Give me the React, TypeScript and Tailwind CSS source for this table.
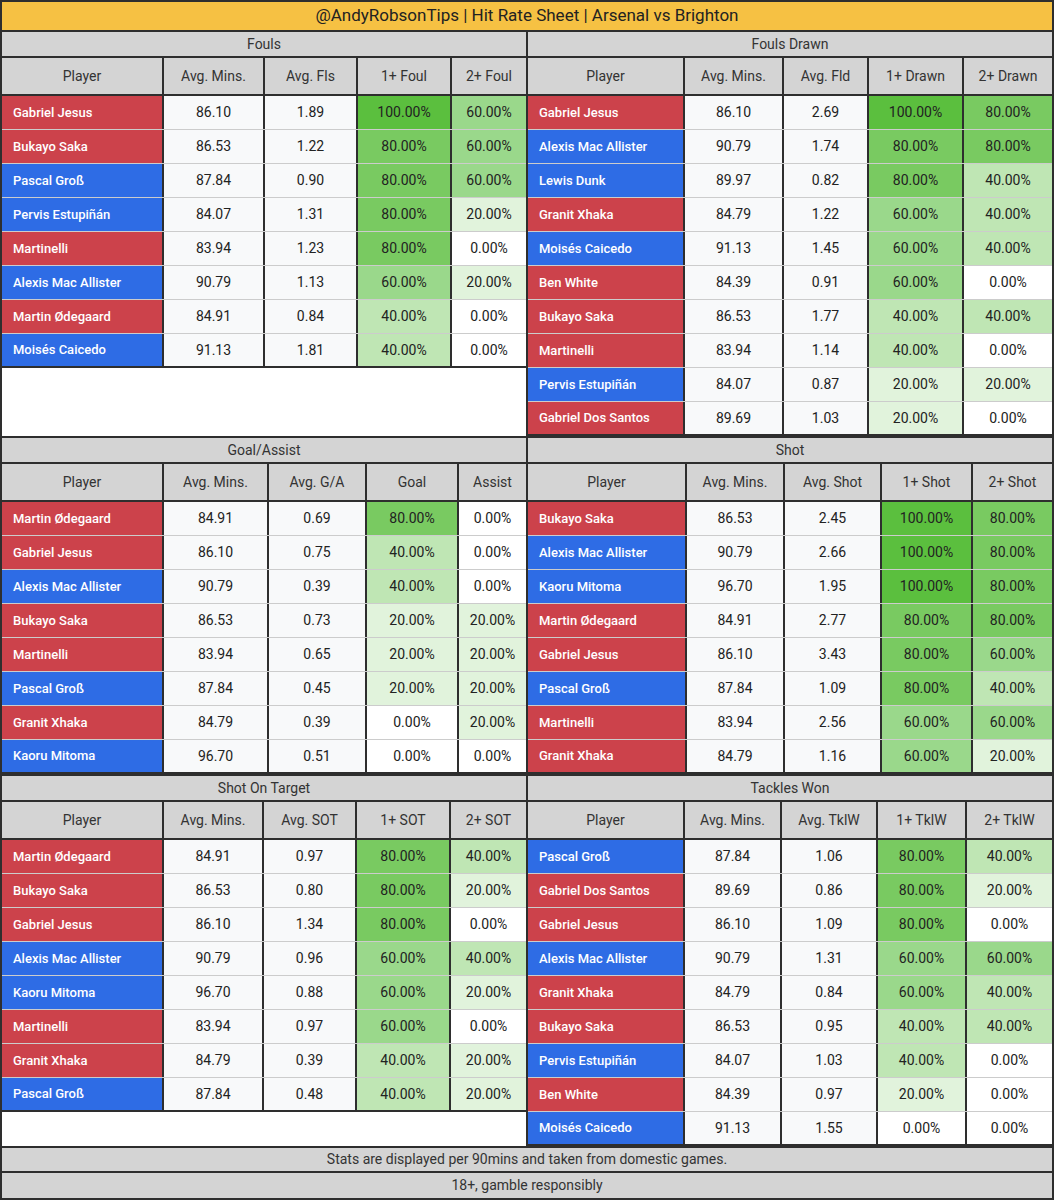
type Team = "A" | "B";
type Row = [string, Team, string, string, number, number];

interface Section {
    title: string;
    cols: string[];
    widths: string[];
    rows: Row[];
}

const pctBg: Record<number, string> = {
    100: "bg-[#5bbf3e]",
    80: "bg-[#79ca61]",
    60: "bg-[#9ad88b]",
    40: "bg-[#bfe6b4]",
    20: "bg-[#e1f3dc]",
    0: "bg-white",
};

const fouls: Section = {
    title: "Fouls",
    cols: ["Player", "Avg. Mins.", "Avg. Fls", "1+ Foul", "2+ Foul"],
    widths: ["w-[162px]", "w-[101px]", "w-[93px]", "w-[94px]"],
    rows: [
        ["Gabriel Jesus", "A", "86.10", "1.89", 100, 60],
        ["Bukayo Saka", "A", "86.53", "1.22", 80, 60],
        ["Pascal Groß", "B", "87.84", "0.90", 80, 60],
        ["Pervis Estupiñán", "B", "84.07", "1.31", 80, 20],
        ["Martinelli", "A", "83.94", "1.23", 80, 0],
        ["Alexis Mac Allister", "B", "90.79", "1.13", 60, 20],
        ["Martin Ødegaard", "A", "84.91", "0.84", 40, 0],
        ["Moisés Caicedo", "B", "91.13", "1.81", 40, 0],
    ],
};

const foulsDrawn: Section = {
    title: "Fouls Drawn",
    cols: ["Player", "Avg. Mins.", "Avg. Fld", "1+ Drawn", "2+ Drawn"],
    widths: ["w-[157px]", "w-[99px]", "w-[85px]", "w-[95px]"],
    rows: [
        ["Gabriel Jesus", "A", "86.10", "2.69", 100, 80],
        ["Alexis Mac Allister", "B", "90.79", "1.74", 80, 80],
        ["Lewis Dunk", "B", "89.97", "0.82", 80, 40],
        ["Granit Xhaka", "A", "84.79", "1.22", 60, 40],
        ["Moisés Caicedo", "B", "91.13", "1.45", 60, 40],
        ["Ben White", "A", "84.39", "0.91", 60, 0],
        ["Bukayo Saka", "A", "86.53", "1.77", 40, 40],
        ["Martinelli", "A", "83.94", "1.14", 40, 0],
        ["Pervis Estupiñán", "B", "84.07", "0.87", 20, 20],
        ["Gabriel Dos Santos", "A", "89.69", "1.03", 20, 0],
    ],
};

const goalAssist: Section = {
    title: "Goal/Assist",
    cols: ["Player", "Avg. Mins.", "Avg. G/A", "Goal", "Assist"],
    widths: ["w-[162px]", "w-[105px]", "w-[98px]", "w-[92px]"],
    rows: [
        ["Martin Ødegaard", "A", "84.91", "0.69", 80, 0],
        ["Gabriel Jesus", "A", "86.10", "0.75", 40, 0],
        ["Alexis Mac Allister", "B", "90.79", "0.39", 40, 0],
        ["Bukayo Saka", "A", "86.53", "0.73", 20, 20],
        ["Martinelli", "A", "83.94", "0.65", 20, 20],
        ["Pascal Groß", "B", "87.84", "0.45", 20, 20],
        ["Granit Xhaka", "A", "84.79", "0.39", 0, 20],
        ["Kaoru Mitoma", "B", "96.70", "0.51", 0, 0],
    ],
};

const shot: Section = {
    title: "Shot",
    cols: ["Player", "Avg. Mins.", "Avg. Shot", "1+ Shot", "2+ Shot"],
    widths: ["w-[159px]", "w-[98px]", "w-[97px]", "w-[91px]"],
    rows: [
        ["Bukayo Saka", "A", "86.53", "2.45", 100, 80],
        ["Alexis Mac Allister", "B", "90.79", "2.66", 100, 80],
        ["Kaoru Mitoma", "B", "96.70", "1.95", 100, 80],
        ["Martin Ødegaard", "A", "84.91", "2.77", 80, 80],
        ["Gabriel Jesus", "A", "86.10", "3.43", 80, 60],
        ["Pascal Groß", "B", "87.84", "1.09", 80, 40],
        ["Martinelli", "A", "83.94", "2.56", 60, 60],
        ["Granit Xhaka", "A", "84.79", "1.16", 60, 20],
    ],
};

const sot: Section = {
    title: "Shot On Target",
    cols: ["Player", "Avg. Mins.", "Avg. SOT", "1+ SOT", "2+ SOT"],
    widths: ["w-[162px]", "w-[100px]", "w-[93px]", "w-[94px]"],
    rows: [
        ["Martin Ødegaard", "A", "84.91", "0.97", 80, 40],
        ["Bukayo Saka", "A", "86.53", "0.80", 80, 20],
        ["Gabriel Jesus", "A", "86.10", "1.34", 80, 0],
        ["Alexis Mac Allister", "B", "90.79", "0.96", 60, 40],
        ["Kaoru Mitoma", "B", "96.70", "0.88", 60, 20],
        ["Martinelli", "A", "83.94", "0.97", 60, 0],
        ["Granit Xhaka", "A", "84.79", "0.39", 40, 20],
        ["Pascal Groß", "B", "87.84", "0.48", 40, 20],
    ],
};

const tackles: Section = {
    title: "Tackles Won",
    cols: ["Player", "Avg. Mins.", "Avg. TklW", "1+ TklW", "2+ TklW"],
    widths: ["w-[157px]", "w-[97px]", "w-[96px]", "w-[89px]"],
    rows: [
        ["Pascal Groß", "B", "87.84", "1.06", 80, 40],
        ["Gabriel Dos Santos", "A", "89.69", "0.86", 80, 20],
        ["Gabriel Jesus", "A", "86.10", "1.09", 80, 0],
        ["Alexis Mac Allister", "B", "90.79", "1.31", 60, 60],
        ["Granit Xhaka", "A", "84.79", "0.84", 60, 40],
        ["Bukayo Saka", "A", "86.53", "0.95", 40, 40],
        ["Pervis Estupiñán", "B", "84.07", "1.03", 40, 0],
        ["Ben White", "A", "84.39", "0.97", 20, 0],
        ["Moisés Caicedo", "B", "91.13", "1.55", 0, 0],
    ],
};

const pairs: [Section, Section][] = [
    [fouls, foulsDrawn],
    [goalAssist, shot],
    [sot, tackles],
];

function Table({ s, className }: { s: Section; className: string }) {
    const w = (i: number) => (i < 4 ? `${s.widths[i]} shrink-0 border-r-2 border-[#2e2e2e]` : "flex-1");
    return (
        <div className={`flex flex-col ${className}`}>
            <div className="h-[26px] flex items-center justify-center bg-[#d4d4d4] border-b-2 border-[#2e2e2e] text-[14px] text-[#333]">
                {s.title}
            </div>
            <div className="h-[38px] flex bg-[#d4d4d4] border-b-2 border-[#2e2e2e] text-[14px] text-[#333]">
                {s.cols.map((c, i) => (
                    <div key={c} className={`${w(i)} flex items-center justify-center`}>{c}</div>
                ))}
            </div>
            {s.rows.map((r, idx) => {
                const last = idx === s.rows.length - 1;
                return (
                    <div
                        key={r[0]}
                        className={`h-[34px] flex text-[14px] ${last ? "border-b-2 border-[#2e2e2e]" : "border-b border-black/20"}`}
                    >
                        <div className={`${w(0)} flex items-center pl-[11px] text-[13px] font-medium text-white ${r[1] === "A" ? "bg-[#cc424b]" : "bg-[#2e6ce5]"}`}>
                            {r[0]}
                        </div>
                        <div className={`${w(1)} flex items-center justify-center bg-[#f8f9fa] text-[#222]`}>{r[2]}</div>
                        <div className={`${w(2)} flex items-center justify-center bg-[#f8f9fa] text-[#222]`}>{r[3]}</div>
                        <div className={`${w(3)} flex items-center justify-center text-[#222] ${pctBg[r[4]]}`}>{r[4]}.00%</div>
                        <div className={`${w(4)} flex items-center justify-center text-[#222] ${pctBg[r[5]]}`}>{r[5]}.00%</div>
                    </div>
                );
            })}
            <div className="flex-1 bg-white" />
        </div>
    );
}

export default function App() {
    return (
        <div className="w-[1054px] bg-white border-2 border-[#2e2e2e] font-['Roboto','Liberation_Sans',sans-serif]">
            <div className="h-[30px] flex items-center justify-center bg-[#f6c143] border-b-2 border-[#2e2e2e] text-[17px] text-[#222]">
                @AndyRobsonTips | Hit Rate Sheet | Arsenal vs Brighton
            </div>
            {pairs.map(([l, r]) => (
                <div key={l.title} className="flex border-b-2 border-[#2e2e2e]">
                    <Table s={l} className="w-[526px] shrink-0 border-r-2 border-[#2e2e2e]" />
                    <Table s={r} className="flex-1" />
                </div>
            ))}
            <div className="h-[25px] flex items-center justify-center bg-[#d4d4d4] border-b-2 border-[#2e2e2e] text-[14px] text-[#333]">
                Stats are displayed per 90mins and taken from domestic games.
            </div>
            <div className="h-[25px] flex items-center justify-center bg-[#d4d4d4] text-[14px] text-[#333]">
                18+, gamble responsibly
            </div>
        </div>
    );
}
